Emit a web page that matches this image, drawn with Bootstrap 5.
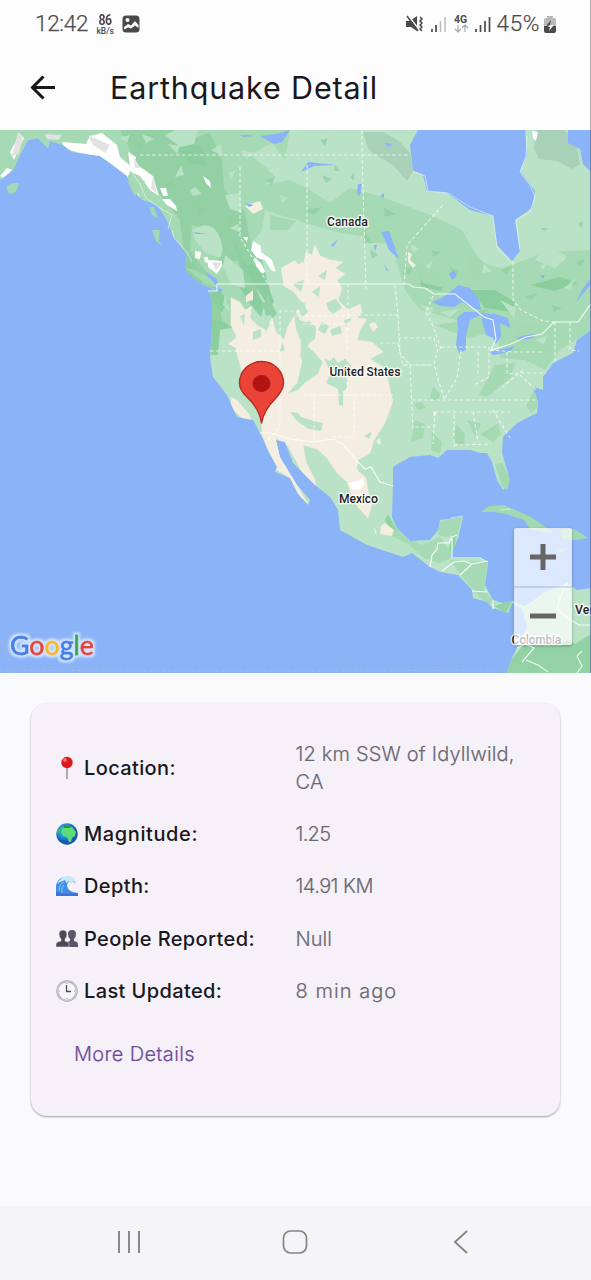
<!DOCTYPE html>
<html lang="en">
<head>
<meta charset="utf-8">
<meta name="viewport" content="width=device-width, initial-scale=1">
<title>Earthquake Detail</title>
<link href="https://cdn.jsdelivr.net/npm/bootstrap@5.3.0/dist/css/bootstrap.min.css" rel="stylesheet">
<style>
body{font-family:Inter,"Liberation Sans",sans-serif;background:#fafafd;color:#19181c;height:1280px;overflow:hidden}
svg{display:block;flex-shrink:0}
.screen{height:1280px}
.top-area{height:130px;background:#fdfdfd;border-right:1px solid #aaa}
.status{height:48px;padding:0 34px 0 35px;color:#4c4c4f}
.clock{font-family:Roboto,sans-serif;font-size:22.5px;font-weight:300;letter-spacing:-.3px;-webkit-text-stroke:.25px #4c4c4f}
.clock.charge{letter-spacing:.6px;margin-left:6px}
.rate{font-family:Roboto,sans-serif;font-size:8.5px;line-height:9px;font-weight:500;margin-left:7px;width:20px}
.rate b{font-size:14px;line-height:14px;font-weight:700;letter-spacing:-.6px;display:block;transform:scaleX(.88)}
.title-bar{height:80px;padding-left:30px}
.title-bar h1{font-size:30.5px;font-weight:400;letter-spacing:.85px;margin:0 0 0 53px;line-height:40px;white-space:nowrap}
.map-area{height:543px}
.zoomer{right:19px;top:398px;width:58px;height:117px;background:rgba(255,255,255,.7);border-radius:2px;box-shadow:0 1px 3px rgba(0,0,0,.3)}
.zoomer button{height:58px;border:0;background:none;padding:0}
.zoomer button+button{border-top:2px solid rgba(130,150,180,.28)}
.info{margin:30px 31px 0 31px;width:529px;height:413px;background:#f6f1f9;border:0;border-radius:16px;box-shadow:0 1px 2px rgba(0,0,0,.36);padding:31px 25px 0 25px}
.line-item{height:52.3px}
.line-item.tall{height:68px}
.key{width:240px;font-size:20px;font-weight:500;gap:6px;white-space:nowrap;letter-spacing:.38px}
.val{font-size:20px;font-weight:300;line-height:28px;color:#6b6870;width:240px;-webkit-text-stroke:.2px #6b6870}
.more{color:#6c4b9b;font-size:20px;text-decoration:none;margin:22px 0 0 18px;letter-spacing:.35px;-webkit-text-stroke:.2px #6c4b9b}
.navkeys{height:74px;background:#f5f5f8;padding:0 122px 3px 117px}
.maplabel{font-family:Roboto,sans-serif;font-size:12.3px;font-weight:500;fill:#222;stroke:#fff;stroke-width:3px;stroke-opacity:.8;paint-order:stroke;stroke-linejoin:round}
</style>
</head>
<body>
<div class="screen d-flex flex-column">
<header class="top-area">
  <div class="status d-flex align-items-center">
    <span class="clock">12:42</span>
    <span class="rate text-center"><b>86</b>kB/s</span>
    <svg style="margin-left:7px" width="18" height="18" viewBox="0 0 18 18"><rect x=".5" y=".5" width="17" height="17" rx="3.5" fill="#49494b"/><circle cx="5.500" cy="5" r="2" fill="#fdfdfd"/><path d="M2 12l4-3 3 1.500 4-4.500 3.500 4v3l-3.500-2.500-4 3-3-1-4 2z" fill="#fdfdfd"/></svg>
    <svg class="ms-auto" width="17" height="18" viewBox="0 0 17 18"><path d="M0 6h4l7-5v15L5 12H0z" fill="#4a4a4c"/><path d="M2 0l12 16" stroke="#fdfdfd" stroke-width="1.500"/><path d="M1 1l11 15" stroke="#4a4a4c" stroke-width="1.500"/><path d="M14 2l2 2-2 2 2 2-2 2 2 2-2 2 2 2" fill="none" stroke="#4a4a4c" stroke-width="1.500"/></svg>
    <svg style="margin-left:8px" width="15" height="17" viewBox="0 0 15 17"><path d="M1 13v3M5 9v7" stroke="#4a4a4c" stroke-width="1.700"/><path d="M9.500 5v11M14 1v15" stroke="#bbb" stroke-width="1.500"/></svg>
    <svg style="margin-left:8px" width="15" height="20" viewBox="0 0 15 20"><text x="0" y="9" font-family="Roboto" font-size="10.500" font-weight="700" fill="#4a4a4c">4G</text><path d="M4 11v7M1 15l3 3 3-3M11 18v-7M8 14l3-3 3 3" fill="none" stroke="#aaa" stroke-width="1.200"/></svg>
    <svg style="margin-left:6px" width="16" height="17" viewBox="0 0 16 17"><path d="M1 13v3M5.500 9v7M10 5v11M14.500 1v15" stroke="#4a4a4c" stroke-width="1.700"/></svg>
    <span class="clock charge">45%</span>
    <svg style="margin-left:4px" width="12" height="17" viewBox="0 0 12 17"><path d="M3 0h6v2h1q2 0 2 2v6H0V4q0-2 2-2h1z" fill="#bababa"/><path d="M0 10h12v5q0 2-2 2H2q-2 0-2-2z" fill="#4a4a4c"/><path d="M7 4L2.500 9.500H6V9z" fill="#4a4a4c"/><path d="M6 9h4l-5 6 1-4H4z" fill="#eee"/></svg>
  </div>
  <div class="title-bar d-flex align-items-center">
    <svg width="27" height="26" viewBox="0 0 27 26"><path d="M25 12.500H3M13.500 1.500L2.500 12.500l11 11" fill="none" stroke="#17161a" stroke-width="3"/></svg>
    <h1><span>Earthquake Detail</span></h1>
  </div>
</header>
<section class="map-area position-relative">
<svg width="591" height="543" viewBox="0 130 591 543">
<defs>
<path id="landshape" d="M0 130V180L13 170 22 151 28 140 38 138 48 148 50 141 63 145 72 152 100 156 110 163 127 176 133 191 143 200 157 205 167 220 173 235 187 255 186 271 200 283 217 291 209 291 212 300 212 328 210 357 213 377 227 395 237 417 253 420 260 433 268 450 277 467 275 472 290 478 297 493 308 505 310 500 297 485 280 457 276 440 285 442 293 463 310 480 315 485 330 497 338 510 340 530 367 545 403 557 412 553 430 567 440 572 458 575 472 590 473 598 487 602 493 608 508 613 512 603 522 609 527 627 512 658 507 673H591V588L577 590 567 583 543 593 530 603 524 606 513 601 503 603 493 600 485 585 488 563 480 557 450 557 458 538 463 517 440 520 438 530 430 540 410 541 397 528 392 517 393 483 393 467 410 457 430 455 438 458 447 450 470 450 480 453 487 453 492 462 497 480 503 490 509 483 508 473 502 453 503 437 517 423 537 413 538 402 533 387 543 390 543 377 553 363 573 353 577 340 591 330V130z"/>
<clipPath id="landclip"><use href="#landshape"/></clipPath>
<filter id="halo" x="-10%" y="-30%" width="120%" height="160%"><feMorphology in="SourceAlpha" operator="dilate" radius="2" result="d"/><feGaussianBlur in="d" stdDeviation=".9" result="s"/><feFlood flood-color="#d3e4fd"/><feComposite in2="s" operator="in" result="h"/><feMerge><feMergeNode in="h"/><feMergeNode in="SourceGraphic"/></feMerge></filter>
</defs>
<rect y="130" width="591" height="543" fill="#8ab3f8"/>
<use href="#landshape" fill="#b9e2c6"/>
<g clip-path="url(#landclip)">
  <!-- northern and coastal forest -->
  <path fill="#a6dab4" d="M0 130H290L285 160 265 185 290 180 310 190 330 203 350 188 380 196 430 215 462 230 480 262 500 268 520 262 545 252 591 250V330L560 350 545 370 525 360 500 358 498 330 470 325 450 318 420 310 405 290 390 240 340 233 295 220 265 210 262 230 250 245 262 290 245 320 225 330 200 320 160 220 100 150 0 180z"/>
  <path fill="#93d1a5" d="M120 130H175L190 140 210 132 222 160 224 190 245 212 250 240 262 260 270 290 245 290 238 260 220 265 212 230 192 225 190 250 205 270 217 290 222 320 235 330 228 355 208 355 205 300 185 265 180 220 160 195 140 170z"/>
  <path fill="#8bce9e" d="M180 140l20 6 8 20-18-3-12-13zM232 238l12 20 20 16 10 28-5 6-12-20-13-18zM178 250l15 10 12 30 14 0 10 12-8 10-20-22-15-20zM238 285l18 5 8 15-3 12-10-12zM210 320l18 4 0 22-16 5zM470 290l25 0 20 12-4 10-26-4zM420 275l25 8-4 8-20-4zM530 285l30-8 18 6-24 8z"/>
  <path fill="#b9e2c6" d="M192 230q20-12 28 8 5 13 0 20l-15-6-10-12zM165 135l15-7 18 2-4 14-14 3zM225 195l15-2 2 20-12-4zM225 255l18 15 2 18-14-3-8-18zM250 155l22-12 15 20-18 6zM545 245l-10 15 20 8 12-12zM500 300l16 8-2 10zM220 330l16-3 10 25-13 18-15-15zM268 225q18-10 32-5v60l-25 2-18-32z"/>
  <path fill="#a4d9b2" d="M270 215l26 6-8 9-18 0zM350 215l24 8 12 20-18 0zM405 250l26 14 18 25-26-6zM470 250l22 20-4 16-22-12zM495 365l20-2-4 14-24 20-8-2zM520 325l20-2 15 14-4 18-30 5-10-14zM534 390l6 12-8 12-6-8zM415 420l10 4-2 14-12 4zM456 424l9 10-1 12-11-4zM432 432l10 10-2 12-9-4zM433 386l7 8-2 8-8-4zM414 404l8-2 4 6-8 2zM480 434l18-10 3 10-8 8zM467 420l14 4-6 12zM435 325l35-5 30 10-32 8z"/>
  <path fill="#a6dab4" d="M387 515l15 20 20 10 18-8 8 12 5-12 8 5-4 14-18 7-15-5-16-14-20-10zM440 521l22-4-6 22-18-4zM450 560l37 2-3 28 12 14-10 0-18-20z"/>
  <path fill="#92d2a4" d="M500 604l12-3-6 12-12-7zM511 660l22-26 16 8 10-8 16 10 16-10v39h-84zM388 514l8 16-4 2-7-12zM449 545l6-8 1 12-5 6z"/>
  <path fill="#b9e2c6" d="M480 610l12-4 10 8zM540 600l30-10 21 20v18l-20 12-24 5-20-4z"/>
  <path fill="#a9d0b8" d="M363 132l20 0 16 9 11 12 3 18-6 10-14-16-12-7-12-8zM536 130h28l12 12 4 22-8 5-15-8-18-2-5-10z"/>
  <!-- dry interior -->
  <path fill="#f4ede2" stroke="#f4ede2" stroke-width=".5" d="M231 298L240 302 245 310 252 306 250 318 258 326 266 330 272 318 276 332 284 340 288 326 294 316 296 330 301 342 300 356 304 368 300 380 292 388 288 394 298 390 306 382 318 374 323 362 314 352 308 346 314 336 316 326 306 322 300 320 296 312 306 304 300 300 294 292 284 286 282 274 294 266 304 262 306 252 312 255 315 245 320 256 331 260 343 262 335 268 345 274 337 280 342 288 338 300 348 310 360 304 362 312 357 318 367 319 360 330 357 340 372 342 383 352 370 359 383 367 388 380 390 390 393 401 388 415 384 425 374 440 370 453 362 458 356 468 366 478 368 490 372 505 368 518 358 507 352 496 347 482 337 473 327 458 317 449 303 445 306 462 315 480 316 487 303 474 288 446 276 438 280 457 297 485 308 504 300 496 290 478 284 474 274 468 268 450 262 434 262 425 255 405 244 388 241 368 236 350 236 335 231 325z"/>
  <path fill="#f4ede2" d="M231 397l6 3 12 14 3 8-10-4-11-10zM374 526l3 8-2-1zM381 526l4-3 9 7-2 6-12-2zM253 203l7-2 3 8-10 5-8-8zM369 324l6-2 3 5-5 5zM433 411l4 2-3 4zM281 268l14-8 5 8-8 10-4-6-6 2zM246 296l7-6 0 10-7 2zM228 344l8-6 0 10zM377 440l3-2 1 7-4-2z"/>
  <path fill="#b9e2c6" d="M324 358l6 3 4-4 4 6 8-5 7 12-6 10 0 9-4 2 0 15-4-1-1-16-12-6 5-10zM290 412l8 1 3 4 13 4 9 2-2 8-12-2-12-8zM302 324l8-3 6 8-1 10-6 4-5-6zM303 358l6 0 4 6-5 10-6 10-6 4zM358 460l6-3 4 8-4 10-6-4zM326 303l10-4 6 9-9 6-5-5zM298 302l6 2 4 8-7 6zM344 320l8-2-6 9zM322 322l7 4-4 8-7-4zM340 326l-10 4 2 6 10-3zM327 270l-9 6 7 4zM292 284l12-4-3 12zM312 292l8-6-1 11zM240 316l5-2-1 12zM253 332l8-3 0 8-8 3zM262 320l8 4-4 8zM280 352l2-10 3 8zM364 436l8-5-3 8z"/>
  <path fill="#93d1a5" d="M267 295l10 18-4 5-8-10zM235 246l18 16-6 4zM262 302l6 0 4 12-6 2z"/>
  <!-- snow and glaciers -->
  <path fill="#fff" d="M10 152l10-18 4 4-10 22zM28 162l8-9 2 6-7 5zM42 148l5-1-2 7-4-1zM0 176l7-8 5 2-8 9zM62 142l24 2 4-8 12-3 15 12 3 12 12 10-6 14-12-13-14-11-24-5-12-4zM128 152l8 5-1 6 18 13 6 20-9-6-10-14-9-4zM160 188l6 0 2 8-5 0zM162 199l8 0 6 7 1 5-10-6zM203 176l7 5 1 7-5-5zM195 251l6 1-1 7-5-1zM204 257l4 0 0 6-3-1zM208 260l14 1 0 5-5 8-9-7zM243 237l5 0-1 5zM253 241l8 5 0 6 11 8 4 12-5-2-6-10-8-2-6-8zM254 257l7 6 4 8-2 3-7-8zM136 188l4 10-1 1z"/>
  <path fill="#e2e2e2" d="M45 134l16 1-2 5-12-1zM18 132l5 5-4 17-7 2zM88 135l22 10-5 8-12-8zM134 158l7 10-6 0zM153 176l4 18-6-6zM212 262l9 1-5 8z"/>
  <!-- scattered terrain patches -->
  <g fill="#c1e6cd" opacity=".75"><path d="M120 137l10-2-3 8zM142 134l12 5-8 4zM168 144l12 2-3 8zM175 177l6-12 3 10zM211 150l10-6 2 12zM190 190l5-3 7 7-9 2zM228 173l8-3-4 8zM240 150l15 3-8 6zM267 170l16-6-8 11zM280 195l8 3-6 5zM225 294l5 18-7-7zM230 228l8-4 3 9zM410 244l10 5-7 3zM425 266l8-6-4 9zM484 264l8 8-10 1zM540 266l8-4-5 8zM564 288l12-10-6 11zM558 255l8 4-5 4zM420 305l14 3-4 8zM440 312l20-3-10 8zM535 340l12-4-3 8zM444 541l8-7-3 14z"/></g>
  <g fill="#8ecfa1" opacity=".75"><path d="M135 140l9 8-6 2zM198 150l10 10-9 0zM170 180l7 9-9-3zM196 205l12 5-9 6zM226 215l9 4-6 3zM265 180l10-4-3 9zM322 175l10 4-6 4zM304 210l18-3-8 8zM384 208l12 6-11 3zM350 178l4-6 0 8zM370 249l8 6-6 4zM402 273l12-9-4 10zM432 250l9 2-8 5zM450 267l8 4-4 8zM500 270l12-4-5 8zM525 296l13-3-8 7zM575 263l10-5-3 8zM552 305l10 3-8 4zM472 312l18-3-9 7zM320 140l8-2-3 8zM335 165l5 6-6 0zM540 228l9 0-4 3zM578 223l5-2-1 8zM365 233l7 10-9-1z"/></g>
  <path fill="#fff" d="M348 483l9-2 6-3 1 6-3 5-8 1zM532 131l6 1-2 9-3-3z"/>
  <path fill="#eef0e6" d="M408 252l4 2-2 6 6 5-3 3-5-6z"/>
</g>
<!-- lakes and bays -->
<g fill="#8ab3f8"><path d="M418 130L410 145 413 171 423 175 427 191 447 193 470 210 493 216 497 245 512 261 520 251 515 220 532 208 535 191 520 171 527 155 525 130zM568 130h23v42l-8-8-3-15-12-6zM260 136l16-2 14-4-8 12-8 2zM240 135l10 0 5 1-12 1zM301 172l7-10 28 3-22 1zM358 184l4 0-2 12-3-2zM380 196l4-3 0 5zM381 232l8-1 10 28-10-9-5-12zM374 245l3 0-2 7zM384 264l5 8-3-2zM331 245l8-6-6 8zM385 143l7 1-4 3zM449 273l5-2 3 5-5 4zM540 275l5 0-2 4zM245 203l9 2-5 2zM193 232l14 2-11 0zM206 272l11 7 2 9 4 2-4 3-8-8z"/>
<path d="M432 302l10-4 12-9 4-4 12 3 9 12 2 10-9-2-10-6-8 5-14-1zM457 318l7-6 16 0 2 2-12 6-4 16 0 14-7 3-3-8 2-16zM481 313l14 1 13 4 2 10-10-5 1 13-5 8-3-6-7-3-4-14zM490 352l16-4 8-2-2 4-12 4-7 1zM516 339l8-4 11-1-2 4-10 2zM576 302l6-12 9-12v6l-13 16z"/></g>
<g fill="#a2d8b2"><path d="M6 187l6-4 7 0-3 9-7 2zM128 182l8 1 2 9-3 5zM141 182l4-2-3 9zM145 198l6-3 4 5-8 1zM149 207l5 0 4 12-6-4zM152 230l8 0-1 11 3 5-6-5zM186 268l9 2 15 8 8 10-11-3-12-9zM481 512l8-6 15-1 16 7 11 5 16 11 8 5-13-1-12-3-6-9-18-6-13-2zM560 530l14-1 14 9-12 2-14-1zM557 550l10-2-7 5zM495 464l7-1 8 16-3 11-5-4z"/></g>
<path fill="none" stroke="#fff" stroke-width="1" opacity=".5" d="M133 174l7 10 6 14 14 10 12 7-4 14M172 230l2 8 13 14 5 10M413 171l12 5 3 15 20 2 22 14 23 9 4 31 15 16M527 136l-1 20-6 16 10 13 5 12-5 15-14 8 4 30M500 510l10-1M480 558l8 4M451 518l12-2"/>
<!-- country borders -->
<path fill="none" stroke="#fff" stroke-width="1.200" opacity=".85" d="M208 291h9v-7H409l4 3 12 1 9 6h21l29 23 9 3 3 19-5 11 20-6 15-7 16-3 12-12h24l15-21 9-3M260 433l10 0 20 6 23 3 20-3 10 5 14 17 8 8 6-2 6 10 3 5 13 4M430 567l2-12 5-6 1-6h11l3-6 5-2M452 539v19M442 571l12-9 10-1 8 3M460 575l12-11 16-3M472 591l15 1M493 600v9M567 583l-6 12-4 14 12 10 10 6 12 0M522 662l12-14-9-4-8 4M526 660l12 5 10 7M582 651l-5 5 5 10-5 7"/>
<path fill="none" stroke="#fff" stroke-width="1.100" stroke-dasharray="3.500 2.500" opacity=".72" d="M140 155H408M240 167v70l28 47M362 130v24l4 135M307 165v118M404 285l3-40 36-40M513 262v38l8 10 22 11 12 1M395 285l3 30-50 0v-30M398 315l2 38 10 12 3 65M348 315v17M210 351h70v-40h23M303 324h44v71h-45M280 351v76l-12 13M314 395v44M313 395h80M354 395v42h-23M380 343l18 0 5 22h30M398 338h36l4 12M433 296l-7 16 7 14 8 23M441 347h48v30l-15 8M403 365l29 0M438 349l-4 15 5 18 6 20M412 400h124M435 412h78M461 350l-4 28-12 20M454 415v32M473 412l5 30M435 412l-2 32M454 445l37-1M415 427h20M490 350l24 2h30M478 352v25M507 352v22l15-1h24M555 322v42M570 322v28l9 1M523 370l-24 20M493 410l17 28M520 375l16 15M345 316l-50 0"/>
<path stroke="#9cbcf3" stroke-dasharray="3 3" d="M0 670q200 2 510 0" fill="none"/>
<path stroke="#c9a6dc" stroke-dasharray="6 4" d="M0 640l14 33" fill="none" opacity=".7"/>
<!-- labels -->
<text class="maplabel" x="327" y="226" textLength="41">Canada</text>
<text class="maplabel" x="329.500" y="376" textLength="71">United States</text>
<text class="maplabel" x="339" y="503" textLength="39">Mexico</text>
<text class="maplabel" x="575" y="614">Venezuela</text>
<text class="maplabel" x="511.500" y="644" textLength="50">Colombia</text>
<!-- location pin -->
<path d="M261.500 423Q259 408 247 397 239.500 390 239.500 383A22 21.500 0 0 1 283.500 383Q283.500 390 275 399 264 410 261.500 423z" fill="#ea4436" stroke="#b82a22" stroke-width="1.400" stroke-linejoin="round"/>
<ellipse cx="261.500" cy="383.500" rx="9" ry="8.500" fill="#b11412"/>
<text x="10" y="655" filter="url(#halo)" textLength="84" lengthAdjust="spacingAndGlyphs" font-family="Lato,Inter,sans-serif" font-size="26.500" font-weight="400" stroke-width=".8"><tspan fill="#4480e8" stroke="#4480e8">G</tspan><tspan fill="#e54438" stroke="#e54438">o</tspan><tspan fill="#f6bb18" stroke="#f6bb18">o</tspan><tspan fill="#4480e8" stroke="#4480e8">g</tspan><tspan fill="#34a853" stroke="#34a853">l</tspan><tspan fill="#e54438" stroke="#e54438">e</tspan></text>
<path d="M590.500 130v543" stroke="#5c78a8" opacity=".8"/>
</svg>
<div class="zoomer position-absolute d-flex flex-column">
  <button class="d-flex align-items-center justify-content-center" aria-label="Zoom in"><svg width="26" height="26"><path d="M0 13h26M13 0v26" stroke="#666" stroke-width="5"/></svg></button>
  <button class="d-flex align-items-center justify-content-center" aria-label="Zoom out"><svg width="26" height="6"><path d="M0 3h26" stroke="#666" stroke-width="5"/></svg></button>
</div>
</section>
<main class="flex-grow-1">
  <div class="card info">
    <div class="line-item tall d-flex align-items-center">
      <div class="key d-flex align-items-center"><svg width="22" height="24" viewBox="0 0 22 24"><path d="M11 10v13" stroke="#96959c" stroke-width="1.500"/><circle cx="11" cy="6.500" r="5.700" fill="#db1720"/><circle cx="9" cy="4" r="2" fill="#f66a67"/></svg><span>Location:</span></div>
      <div class="val" style="letter-spacing:.17px">12 km SSW of Idyllwild, CA</div>
    </div>
    <div class="line-item d-flex align-items-center" style="margin-top:6px">
      <div class="key d-flex align-items-center"><svg width="22" height="22" viewBox="0 0 22 22"><defs><radialGradient id="sea" cx=".4" cy=".35"><stop stop-color="#39c2f2"/><stop offset=".7" stop-color="#198bd4"/><stop offset="1" stop-color="#1758ad"/></radialGradient></defs><circle cx="11" cy="11" r="10.700" fill="url(#sea)"/><path d="M7 5l4-2 5 1 4 5-1 4-3 2-1 4-2 0-2-5-4-1-2-4z" fill="#5edc79"/><path d="M8 2l9 2-4 1-5 0z" fill="#28963c"/><path d="M1 8l4-4 1 2-4 5z" fill="#48b96c"/></svg><span style="letter-spacing:.6px">Magnitude:</span></div>
      <div class="val" style="letter-spacing:-.7px">1.25</div>
    </div>
    <div class="line-item d-flex align-items-center">
      <div class="key d-flex align-items-center"><svg width="22" height="22" viewBox="0 0 22 22"><path d="M0 21V12C0 5 6 1 13 2q6 1 7 7l-4-3q-5 0-5 5 1 6 11 7v3z" fill="#3d8ee4"/><path d="M1 9Q5 1 12 1q8 0 8 8l-3-3-2 3-2-3-3 2-1-3-5 2z" fill="#c7e8f6"/><path d="M0 21v-4q9 3 22 1v3z" fill="#3f71d8"/><path d="M3 16Q3 9 8 7M6 18Q5 12 8 10" fill="none" stroke="#8ac9f2"/></svg><span>Depth:</span></div>
      <div class="val" style="letter-spacing:-.55px">14.91 KM</div>
    </div>
    <div class="line-item d-flex align-items-center">
      <div class="key d-flex align-items-center"><svg width="22" height="20" viewBox="0 0 22 20"><g fill="#5a5668"><path d="M10 18v-3q0-2 4-3v-2q-2-2-2-5 0-4 4-4t4 4q0 3-2 5v2q4 1 4 3v3z"/><path fill="#4b4858" stroke="#f6f1f9" stroke-width=".5" d="M0 18v-3q0-2 5-3v-2Q3 8 3 5q0-4 4-4t4 4q0 3-2 5v2q4 1 4 3v3z"/></g></svg><span>People Reported:</span></div>
      <div class="val">Null</div>
    </div>
    <div class="line-item d-flex align-items-center">
      <div class="key d-flex align-items-center"><svg width="22" height="22" viewBox="0 0 22 22"><circle cx="11" cy="11" r="9.700" fill="#f7f7f8" stroke="#a5a3a8" stroke-width="2"/><circle cx="11" cy="11" r="9.700" fill="none" stroke="#dedde1" stroke-width=".7"/><path d="M10.500 5v6.500H15" fill="none" stroke="#4d4b50" stroke-width="1.300"/><path d="M11 3v1M11 18v1M3 11h1M18 11h1" stroke="#999"/></svg><span>Last Updated:</span></div>
      <div class="val" style="letter-spacing:1.05px">8 min ago</div>
    </div>
    <a href="#" class="more fw-light"><span>More Details</span></a>
  </div>
</main>
<nav class="navkeys d-flex align-items-center justify-content-between">
  <svg width="25" height="26" viewBox="0 0 25 26"><path d="M2 2v22M12 2v22M22 2v22" stroke="#858588" stroke-width="1.900"/></svg>
  <svg width="26" height="26" viewBox="0 0 26 26" style="margin-right:6px"><rect x="1.500" y="2" width="23" height="22" rx="7" fill="none" stroke="#858588" stroke-width="1.700"/></svg>
  <svg width="16" height="26" viewBox="0 0 16 26"><path d="M14 2L2 13l12 11" fill="none" stroke="#858588" stroke-width="1.900"/></svg>
</nav>
</div>
<script src="https://cdn.jsdelivr.net/npm/bootstrap@5.3.0/dist/js/bootstrap.bundle.min.js"></script>
</body>
</html>
